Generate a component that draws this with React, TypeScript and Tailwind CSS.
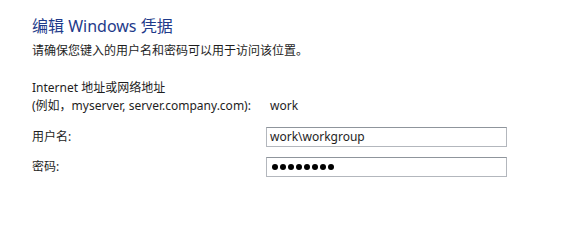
import React from 'react';

const font = { fontFamily: '"Noto Sans", "Noto Sans CJK SC", sans-serif' };

export default function App() {
  return (
    <div className="w-[572px] h-[208px] bg-white text-[#1e1e1e] text-[12px] leading-[18px]" style={font}>
      <div className="pl-[32px] pt-[15px]">
        {/* Title */}
        <h1 className="text-[16px] leading-[22px] text-[#1e3a8a]">编辑 Windows 凭据</h1>
        <p className="mt-[5px]">请确保您键入的用户名和密码可以用于访问该位置。</p>

        {/* Form */}
        <div className="mt-[19px] grid grid-cols-[234px_241px] items-center gap-y-[10px]">
          <div className="mb-[2px]">
            <div>Internet 地址或网络地址</div>
            <div>(例如，myserver, server.company.com):</div>
          </div>
          <div className="self-end pl-[4px] mb-[2px]">work</div>

          <label>用户名:</label>
          <div className="h-[20px] border border-[#b3b7bd] border-t-[#8f959c] bg-white px-[3px] flex items-center">
            work\workgroup
          </div>

          <label>密码:</label>
          <div className="h-[20px] border border-[#b3b7bd] border-t-[#8f959c] bg-white pl-[5px] flex items-center gap-[2px]">
            {Array.from({ length: 8 }).map((_, i) => (
              <span key={i} className="w-[6px] h-[6px] rounded-full bg-black" />
            ))}
          </div>
        </div>
      </div>
    </div>
  );
}
